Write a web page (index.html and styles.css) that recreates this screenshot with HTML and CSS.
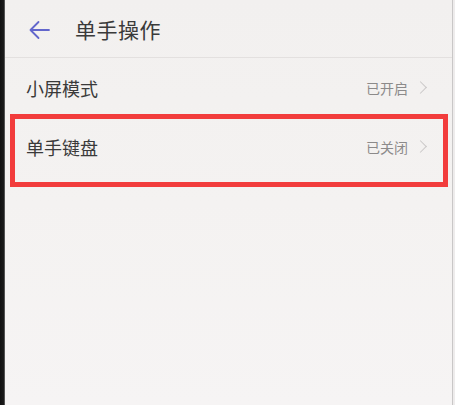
FILE: index.html
```html
<!DOCTYPE html>
<html lang="zh-CN">
<head>
<meta charset="utf-8">
<link rel="stylesheet" href="styles.css">
</head>
<body>
<div class="device">
  <div class="bezel"></div>
  <div class="screen">
    <header class="topbar">
      <svg class="back" width="22" height="20" viewBox="0 0 22 20">
        <path d="M21 10H2.5M10.5 2L2.5 10L10.5 18" fill="none" stroke="#6266cc" stroke-width="1.8" stroke-linecap="round" stroke-linejoin="round"/>
      </svg>
      <h1 class="title">单手操作</h1>
    </header>
    <div class="list">
      <div class="row">
        <span class="label">小屏模式</span>
        <span class="status">已开启<span class="chev"></span></span>
      </div>
      <div class="row row-highlight">
        <span class="label">单手键盘</span>
        <span class="status">已关闭<span class="chev"></span></span>
      </div>
    </div>
  </div>
  <div class="edge"></div>
</div>
</body>
</html>
```
FILE: styles.css
```css
html, body {
  margin: 0;
  padding: 0;
  width: 455px;
  height: 405px;
  overflow: hidden;
  background: #f4f2f1;
  font-family: "Noto Sans CJK SC", "Noto Sans", sans-serif;
}
.device {
  display: flex;
  height: 405px;
}
.bezel {
  width: 5px;
  background: linear-gradient(to right, #111 0, #1c1c1c 4px, #8a8a8a 5px);
  flex: none;
}
.screen {
  flex: 1;
  background: linear-gradient(to bottom, #f2f0ef 0, #f4f2f1 50%, #f6f4f4 100%);
  border-right: 1px solid #c9c7c7;
}
.edge {
  width: 2px;
  background: #eeecec;
  flex: none;
}
.topbar {
  height: 58px;
  display: flex;
  align-items: center;
  padding-left: 23px;
  border-bottom: 1px solid #e3e0df;
  box-sizing: border-box;
}
.back {
  display: block;
  margin-top: 3px;
}
.title {
  margin: 0 0 0 25px;
  font-size: 21px;
  font-weight: 400;
  color: #3a3a3a;
  letter-spacing: 0.5px;
}
.list {
  display: flex;
  flex-direction: column;
}
.row {
  height: 59px;
  display: flex;
  align-items: center;
  justify-content: space-between;
  padding: 0 25px 0 21px;
  position: relative;
}
.label {
  font-size: 18px;
  color: #3a3a3a;
}
.status {
  display: flex;
  align-items: center;
  font-size: 14px;
  color: #8c8a8a;
}
.chev {
  width: 8px;
  height: 8px;
  border-top: 1px solid #cac8c8;
  border-right: 1px solid #cac8c8;
  transform: rotate(45deg);
  margin-left: 8px;
  margin-right: 2px;
}
.row-highlight::after {
  content: "";
  position: absolute;
  left: 5px;
  right: 4px;
  top: -3px;
  bottom: -11px;
  border: 5px solid #f23c3c;
}
```
